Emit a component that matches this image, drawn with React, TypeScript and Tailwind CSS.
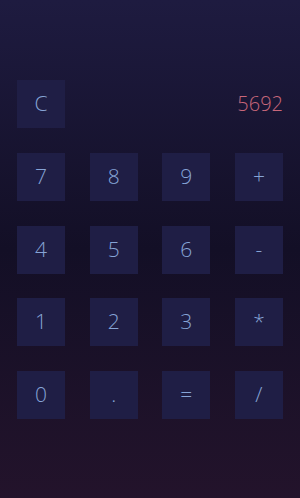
const keys = ["7", "8", "9", "+", "4", "5", "6", "-", "1", "2", "3", "*", "0", ".", "=", "/"];

function Key({ label }: { label: string }) {
  return (
    <button className="flex h-[48px] w-[48px] items-center justify-center bg-[#1f1e45] text-[21px] font-light text-[#86a4d6]">
      {label}
    </button>
  );
}

export default function App() {
  return (
    <div
      className="h-[498px] w-[300px] bg-gradient-to-b from-[#1e1b40] via-[#130f26] to-[#23132b] px-[17px] pt-[80px]"
      style={{ fontFamily: '"Open Sans", "Noto Sans", sans-serif' }}
    >
      <div className="flex items-center justify-between">
        <Key label="C" />
        <span className="text-[20px] font-light text-[#c8677a]">5692</span>
      </div>
      <div className="mt-[25px] grid grid-cols-4 gap-x-[24.6px] gap-y-[24.6px]">
        {keys.map((k) => (
          <Key key={k} label={k} />
        ))}
      </div>
    </div>
  );
}
